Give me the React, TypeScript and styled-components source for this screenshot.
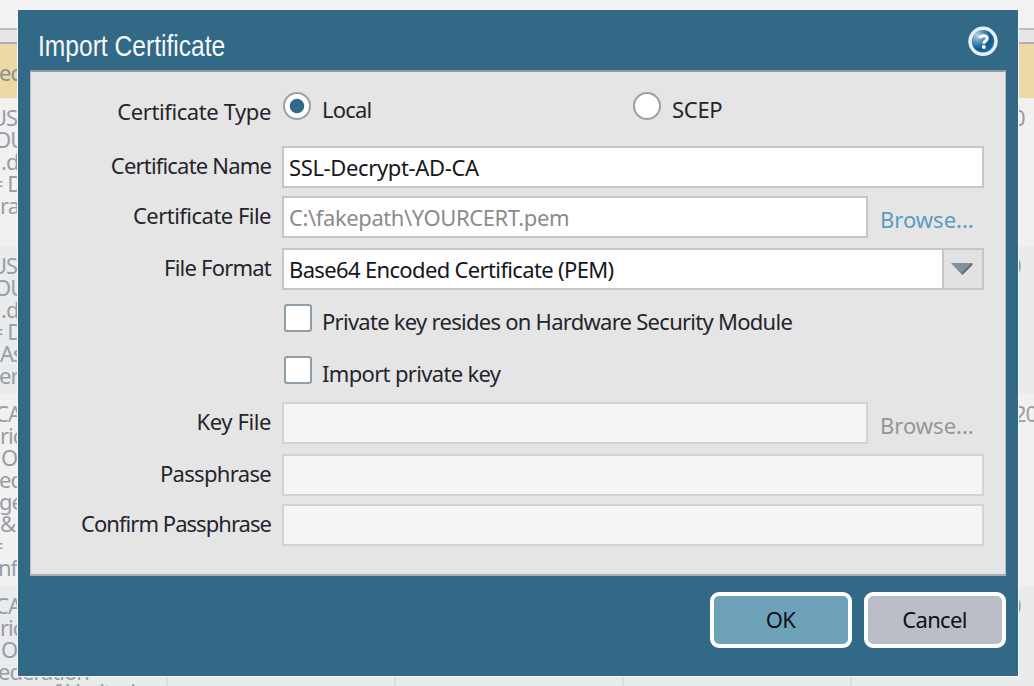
import React from 'react';
import styled, { createGlobalStyle } from 'styled-components';

const GlobalStyle = createGlobalStyle`
  * { box-sizing: border-box; }
  body { margin: 0; font: 22px/22px "Noto Sans", "Open Sans", sans-serif; color: #26242c; }
`;

const Page = styled.div`
  position: relative;
  height: 686px;
  overflow: hidden;
  background: #f1f1f1;
`;

const Toolbar = styled.div`
  height: 28px;
  background: #f2f2f2;
`;

const Strip = styled.div`
  height: 16px;
  border-top: 2px solid #bcbcbc;
  border-bottom: 2px solid #b0b1b3;
  background: #e6e6e6;
`;

const TableHead = styled.div`
  height: 54px;
  padding-top: 17px;
  background: #ecd9a6;
  color: #8f8f8c;
`;

const TableRow = styled.div<{ $alt?: boolean; $lines: number }>`
  display: grid;
  grid-template-columns: 168px 228px 228px 228px 1fr;
  height: ${p => p.$lines * 22 + 16}px;
  background: ${p => (p.$alt ? '#e9ebec' : '#f1f1f1')};
  color: #989da6;
`;

const Cell = styled.div<{ $ruled?: boolean }>`
  padding-top: 8px;
  border-right: 2px solid ${p => (p.$ruled ? '#dcdee0' : 'transparent')};
  white-space: pre;
  overflow: hidden;
  &:last-child { border-right: 0; }
`;

const Line = styled.div<{ $shift: number; $tight?: boolean }>`
  height: ${p => (p.$tight ? 20 : 22)}px;
  margin-left: ${p => p.$shift}px;
  letter-spacing: -1px;
`;

const Dialog = styled.section`
  position: absolute;
  left: 18px;
  top: 10px;
  width: 1000px;
  height: 666px;
  padding: 0 12px;
  background: #326986;
  box-shadow: 0 0 0 1px #f7f9fa;
`;

const TitleBar = styled.header`
  display: flex;
  justify-content: space-between;
  height: 60px;
  padding: 16px 8px 0 8px;
`;

const Title = styled.h1`
  margin: 3px 0 0;
  font: 400 29px/34px "Liberation Sans Narrow", "Liberation Sans", sans-serif;
  color: #f4f9fb;
  transform: scaleX(0.848);
  transform-origin: left;
  white-space: nowrap;
`;

const Panel = styled.div`
  height: 506px;
  padding-top: 20px;
  border: 1px solid #b4bcc1;
  border-top: 2px solid #8f999f;
  border-bottom: 2px solid #a4afb5;
  background: #e5e5e5;
`;

const Row = styled.div<{ $gap?: number }>`
  display: flex;
  height: 42px;
  margin-top: ${p => p.$gap ?? 0}px;
`;

const Text = styled.span<{ $ls?: number; $drop?: number; $color?: string }>`
  white-space: nowrap;
  line-height: 39px;
  margin-top: ${p => p.$drop ?? 0}px;
  letter-spacing: ${p => p.$ls ?? 0}px;
  ${p => p.$color && `color: ${p.$color};`}
`;

const Label = styled(Text)`
  width: 240px;
  margin-right: 11px;
  text-align: right;
`;

const Field = styled.div<{ $short?: boolean; $disabled?: boolean }>`
  display: flex;
  justify-content: space-between;
  width: ${p => (p.$short ? 586 : 702)}px;
  height: 42px;
  padding-left: 5px;
  border: 2px solid ${p => (p.$disabled ? '#d3d3d3' : '#c5c7c7')};
  background: ${p => (p.$disabled ? '#f5f5f5' : '#fff')};
  color: #17161a;
`;

const Trigger = styled.span`
  display: flex;
  align-items: center;
  justify-content: center;
  width: 40px;
  padding-right: 2px;
  border-left: 2px solid #c5c7c7;
  background: #e2e2e2;
`;

const Link = styled(Text)`
  margin-left: 12px;
`;

const Radio = styled.span<{ $on?: boolean }>`
  width: 28px;
  height: 28px;
  margin: 0 11px 0 1px;
  border: 2px solid #96a2aa;
  border-radius: 50%;
  background: ${p => (p.$on ? 'radial-gradient(circle, #326986 6.7px, #fff 7.7px)' : '#fff')};
`;

const RadioOption = styled.span<{ $width: number }>`
  display: flex;
  width: ${p => p.$width}px;
`;

const CheckRow = styled.div<{ $gap: number }>`
  display: flex;
  height: 38px;
  margin: ${p => p.$gap}px 0 0 253px;
`;

const Box = styled.span`
  width: 28px;
  height: 28px;
  margin-right: 10px;
  border: 2px solid #8f9da6;
  border-radius: 3px;
  background: #fff;
`;

const Footer = styled.footer`
  display: flex;
  justify-content: flex-end;
  gap: 12px;
  padding-top: 16px;
`;

const Button = styled.button<{ $bg: string }>`
  width: 142px;
  height: 56px;
  padding: 0 1px 2px 0;
  border: 4px solid #fff;
  border-radius: 9px;
  background: ${p => p.$bg};
  color: #101018;
  font: inherit;
  letter-spacing: -0.7px;
`;

const HelpIcon = () => (
  <svg width="30" height="30" viewBox="0 0 30 30">
    <defs>
      <radialGradient id="ball" cx="0.25" cy="0.25" r="0.8">
        <stop offset="0" stopColor="#b9d5e7" />
        <stop offset="0.45" stopColor="#3f86b0" />
        <stop offset="0.75" stopColor="#0f5a8a" />
        <stop offset="1" stopColor="#1d6c9c" />
      </radialGradient>
    </defs>
    <circle cx="15" cy="15.3" r="14.7" fill="#e6eff8" />
    <circle cx="15" cy="15.3" r="11.2" fill="url(#ball)" />
    <path d="M11.8 12.1Q12.5 9.8 15.8 9.8Q19.2 10 19.2 12.4Q19.1 14.1 17.2 15.1Q15.8 15.8 15.8 17.7" fill="none" stroke="#fff" strokeWidth="3" />
    <rect x="14" y="19.3" width="3.6" height="3.4" rx="0.8" fill="#fff" />
  </svg>
);

const Arrow = () => (
  <svg width="22" height="12" viewBox="0 0 22 12">
    <path d="M0 0H22L11 12Z" fill="#82929b" />
    <path d="M21 1L11 11" stroke="#5d6d77" strokeWidth="2" />
  </svg>
);

type L = [string, number];
type RowData = { lines: L[]; date: L };

const rows: RowData[] = [
  { lines: [['US', -9], ['OU', -6], ['.d', 1], ['= D', -9], ['ra', 0]], date: ['0', 1013] },
  { lines: [['US', -9], ['OU', -6], ['.d', 1], ['= D', -9], ['As', 0], ['er', -1]], date: ['0', 1009] },
  { lines: [['CA', -5], ['ric', 0], ['O', 1], ['ed', -1], ['ge', -1], ['& T', 0], ['=', -9], ['nfe', -2]], date: ['20', 1014] },
  { lines: [['CA', -5], ['ric', 0], ['O', 1], ['ederation', -2], ['of Limited', 41]], date: ['0', 1009] },
];

export default function App() {
  return (
    <Page>
      <GlobalStyle />
      <Toolbar />
      <Strip />
      <TableHead><Line $shift={-1}>ect</Line></TableHead>
      {rows.map((r, i) => (
        <TableRow key={i} $alt={i % 2 === 1} $lines={i === 2 ? 8 : 6}>
          <Cell $ruled>
            {r.lines.map(([t, x], j) => <Line key={j} $shift={x} $tight={i === 3 && j === 3}>{t}</Line>)}
          </Cell>
          <Cell $ruled /><Cell $ruled /><Cell $ruled />
          <Cell><Line $shift={r.date[1] - 852}>{r.date[0]}</Line></Cell>
        </TableRow>
      ))}
      <Dialog>
        <TitleBar>
          <Title>Import Certificate</Title>
          <HelpIcon />
        </TitleBar>
        <Panel>
          <Row>
            <Label $ls={-0.4}>Certificate Type</Label>
            <RadioOption $width={350}><Radio $on /><Text $ls={-0.8} $drop={-2}>Local</Text></RadioOption>
            <RadioOption $width={200}><Radio /><Text $ls={-0.3} $drop={-2}>SCEP</Text></RadioOption>
          </Row>
          <Row $gap={12}>
            <Label $ls={-0.82}>Certificate Name</Label>
            <Field><Text $ls={-0.36}>SSL-Decrypt-AD-CA</Text></Field>
          </Row>
          <Row $gap={8}>
            <Label $ls={-0.52}>Certificate File</Label>
            <Field $short><Text $ls={-0.4} $color="#8b8b8b">C:\fakepath\YOURCERT.pem</Text></Field>
            <Link $drop={4} $color="#5a9cc0">Browse...</Link>
          </Row>
          <Row $gap={10}>
            <Label $ls={-0.78}>File Format</Label>
            <Field><Text $ls={-0.65}>Base64 Encoded Certificate (PEM)</Text><Trigger><Arrow /></Trigger></Field>
          </Row>
          <CheckRow $gap={14}><Box /><Text $ls={-0.73} $drop={-2}>Private key resides on Hardware Security Module</Text></CheckRow>
          <CheckRow $gap={14}><Box /><Text $ls={-0.67} $drop={-2}>Import private key</Text></CheckRow>
          <Row $gap={8}>
            <Label $ls={-0.4}>Key File</Label>
            <Field $short $disabled />
            <Link $drop={4} $color="#969696">Browse...</Link>
          </Row>
          <Row $gap={10}><Label $ls={-0.67}>Passphrase</Label><Field $disabled /></Row>
          <Row $gap={8}><Label $ls={-0.96}>Confirm Passphrase</Label><Field $disabled /></Row>
        </Panel>
        <Footer>
          <Button $bg="#6ea2b9">OK</Button>
          <Button $bg="#bbbec7">Cancel</Button>
        </Footer>
      </Dialog>
    </Page>
  );
}
